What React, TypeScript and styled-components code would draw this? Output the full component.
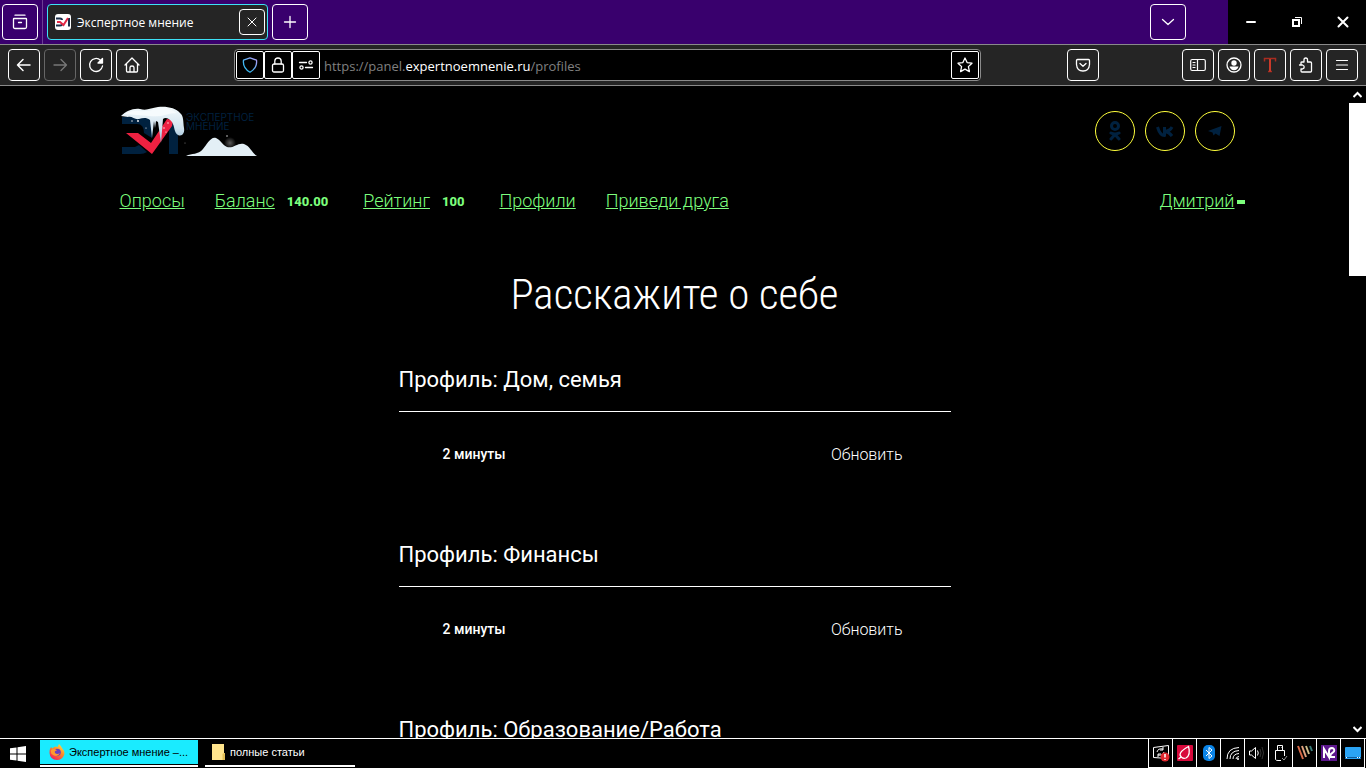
import React from "react";
import styled, { createGlobalStyle } from "styled-components";

const GlobalStyle = createGlobalStyle`
  *, *::before, *::after { box-sizing: border-box; }
  html, body, #root { height: 100%; }
  body { margin: 0; background: #000; color: #fff; font-family: Roboto, "Liberation Sans", sans-serif; overflow: hidden; }
  button { font: inherit; color: inherit; background: none; border: 0; padding: 0; margin: 0; cursor: pointer; }
  svg { display: block; }
`;

const UI_FONT = `"Open Sans", "Noto Sans", sans-serif`;

const Screen = styled.div`
  display: flex;
  flex-direction: column;
  height: 100vh;
`;

/* ---------- browser chrome ---------- */

const TabStrip = styled.div`
  display: flex;
  align-items: stretch;
  height: 44px;
  flex: none;
  background: #39006d;
  font-family: ${UI_FONT};
`;

const TabsArea = styled.div`
  display: flex;
  align-items: center;
  flex: 1;
  padding: 0 42px 0 2px;
`;

const ChromeButton = styled.button<{ $size: number; $dim?: boolean }>`
  display: grid;
  place-items: center;
  flex: none;
  width: ${(p) => p.$size}px;
  height: ${(p) => p.$size}px;
  border: 1px solid ${(p) => (p.$dim ? "#666" : "#fff")};
  border-radius: 4px;
  color: ${(p) => (p.$dim ? "#777" : "#fff")};
`;

const StripDivider = styled.span`
  width: 1px;
  height: 100%;
  margin: 0 4px;
  background: #6c3f95;
`;

const Tab = styled.div`
  display: flex;
  align-items: center;
  width: 221px;
  height: 36px;
  margin-right: 4px;
  padding: 0 2px 0 7px;
  border: 1px solid #3ee1f5;
  border-radius: 4px;
  background: #252525;
  font-size: 12px;
`;

const TabTitle = styled.span`
  flex: 1;
  margin-left: 6px;
  white-space: nowrap;
`;

const Spacer = styled.span<{ $width?: number }>`
  flex: ${(p) => (p.$width ? `0 0 ${p.$width}px` : "1")};
`;

const WindowButtons = styled.div`
  display: flex;
  background: #000;
`;

const WindowButton = styled.button`
  display: grid;
  place-items: center;
  width: 46px;
`;

const Toolbar = styled.div`
  display: flex;
  align-items: center;
  flex: none;
  height: 42px;
  padding: 0 8px;
  border-top: 1px solid #8a8a8a;
  border-bottom: 1px solid #8a8a8a;
  background: #252525;
  font-family: ${UI_FONT};
`;

const ButtonGroup = styled.div`
  display: flex;
  gap: 4px;
`;

const AddressBar = styled.form`
  display: flex;
  align-items: center;
  flex: 1;
  height: 32px;
  margin: 0;
  padding: 0 1px;
  border: 1px solid #8a8a8a;
  border-radius: 4px;
  background: #000;
  font-size: 13px;
`;

const AddressButton = styled.button`
  display: grid;
  place-items: center;
  width: 28px;
  height: 28px;
  border: 1px solid #fff;
  border-radius: 2px;
`;

const AddressText = styled.a`
  flex: 1;
  margin-left: 4px;
  padding-top: 2px;
  color: #808080;
  text-decoration: none;
  strong { color: #fff; font-weight: 400; }
`;

/* ---------- page ---------- */

const Viewport = styled.div`
  display: flex;
  flex: 1;
  min-height: 0;
`;

const Page = styled.main`
  flex: 1;
  overflow: hidden;
`;

const Container = styled.header`
  max-width: 1140px;
  margin: 0 auto;
  padding: 18px 0 0 15px;
`;

const BrandRow = styled.div`
  display: flex;
  align-items: flex-start;
  justify-content: space-between;
`;

const Social = styled.div`
  display: flex;
  gap: 10px;
  margin: 7px 10px 0 0;
`;

const SocialLink = styled.a`
  display: grid;
  place-items: center;
  width: 40px;
  height: 40px;
  border: 1px solid #ffff3c;
  border-radius: 50%;
  color: #00213f;
`;

const Nav = styled.nav`
  display: flex;
  align-items: center;
  margin-top: 31px;
  height: 24px;
  font-size: 18px;
  font-weight: 300;
  line-height: 24px;
  color: #7dff7d;
`;

const NavItem = styled.span`
  display: flex;
  align-items: center;
  margin-right: 30px;
`;

const NavLink = styled.a`
  color: inherit;
  text-decoration: underline;
`;

const NavValue = styled.span`
  margin: 1px 5px 0 12px;
  font-size: 13px;
  font-weight: 800;
`;

const UserMenu = styled.span`
  display: flex;
  align-items: center;
  gap: 2px;
  margin-left: auto;
`;

const Caret = styled.span`
  width: 8px;
  height: 4px;
  background: #7dff7d;
  margin-top: 2px;
`;

const Title = styled.h1`
  margin: 55px 0 0;
  font-family: "Roboto Condensed", Roboto, sans-serif;
  font-size: 43px;
  font-weight: 300;
  line-height: 52px;
  text-align: center;
`;

const Profiles = styled.div`
  max-width: 552px;
  margin: 40px auto 0;
`;

const ProfileCard = styled.section`
  height: 175px;
`;

const ProfileTitle = styled.h2`
  margin: 0;
  padding: 6px 0 17px;
  border-bottom: 1px solid #fff;
  font-size: 22px;
  font-weight: 400;
  line-height: 28px;
`;

const ProfileRow = styled.div`
  display: flex;
  align-items: flex-start;
  justify-content: space-between;
  padding: 31px 48px 0 44px;
`;

const Duration = styled.span`
  font-size: 14px;
  font-weight: 500;
  line-height: 22px;
`;

const UpdateButton = styled.button`
  font-size: 16px;
  font-weight: 300;
  line-height: 24px;
`;

const ScrollTrack = styled.div`
  display: flex;
  flex-direction: column;
  width: 17px;
`;

const ScrollButton = styled.button`
  display: grid;
  place-items: center;
  height: 17px;
`;

const ScrollThumb = styled.div`
  height: 173px;
  margin-bottom: auto;
  background: #fff;
`;

/* ---------- taskbar ---------- */

const Taskbar = styled.footer`
  display: flex;
  flex: none;
  height: 30px;
  border-top: 1px solid #fff;
  font-family: "Liberation Sans", Arial, sans-serif;
  font-size: 11px;
`;

const StartButton = styled.button`
  display: grid;
  place-items: center;
  width: 36px;
  margin-right: 4px;
`;

const Task = styled.button<{ $active?: boolean }>`
  display: flex;
  width: ${(p) => (p.$active ? 158 : 150)}px;
  margin: 1px 7px 1px 0;
  border-bottom: 2px solid #fff;
  color: ${(p) => (p.$active ? "#000" : "#fff")};
`;

const TaskFace = styled.span<{ $active?: boolean }>`
  display: flex;
  align-items: center;
  gap: 4px;
  width: 100%;
  height: 24px;
  padding-left: ${(p) => (p.$active ? 9 : 5)}px;
  background: ${(p) => (p.$active ? "#1aebff" : "transparent")};
  white-space: nowrap;
`;

const Tray = styled.div`
  display: flex;
  margin-left: auto;
  padding-right: 1px;
  border-left: 1px solid #fff;
`;

const TrayButton = styled.button`
  display: grid;
  place-items: center;
  width: 24px;
  border-right: 1px solid #fff;
  border-bottom: 1px solid #fff;
`;

/* ---------- icons ---------- */

type IconProps = { children: React.ReactNode; size?: number; width?: number };

const Icon = ({ children, size = 16, width = 1 }: IconProps) => (
  <svg
    width={size}
    height={size}
    viewBox="0 0 16 16"
    fill="none"
    stroke="currentColor"
    strokeWidth={width}
    strokeLinecap="round"
    strokeLinejoin="round"
    aria-hidden="true"
  >
    {children}
  </svg>
);

const Logo = () => (
  <svg width="140" height="54" viewBox="0 0 140 54" role="img" aria-label="Экспертное мнение">
    <defs>
      <linearGradient id="snow" x1="0" y1="0" x2="0" y2="1">
        <stop offset="0" stopColor="#f4fafc" />
        <stop offset="0.6" stopColor="#cfe2ee" />
        <stop offset="1" stopColor="#8fb6d3" />
      </linearGradient>
      <radialGradient id="glow">
        <stop offset="0" stopColor="#5a5a5a" />
        <stop offset="1" stopColor="#000" />
      </radialGradient>
    </defs>
    <path d="M2 13H32V34L24 29Q24 20 17 20H2Z" fill="#00213f" />
    <path d="M2 43H15L19 41L27 48Q24 50 20 50H2Z" fill="#00213f" />
    <path d="M49 22L58 14V50H49Z" fill="#00213f" />
    <path d="M6 29H18L31 39L47 15L53 16L52 22L32 50Z" fill="#ee2141" />
    <path
      d="M1 12C6 7 13 4 20 5C27 7 31 4 38 3C47 2 56 4 60 9C64 12 63 18 64 24C65 29 62 33 58 31C54 29 55 23 52 18C49 14 45 13 43 15L41 39L38 18L36 17L35 24L34 17L32 34L30 16C26 13 23 14 19 15C15 16 12 12 8 13Z"
      fill="url(#snow)"
    />
    <path d="M4 10Q13 6 20 7T36 5T57 9Q50 9 45 11T29 12T4 10Z" fill="#f6fbfd" />
    <g fill="#fff">
      <circle cx="12" cy="17" r="0.700" />
      <circle cx="18" cy="17" r="0.900" />
      <circle cx="26" cy="24" r="0.600" />
      <circle cx="44" cy="24" r="0.700" />
      <circle cx="48" cy="19" r="0.700" />
      <circle cx="46" cy="28" r="0.600" />
      <circle cx="107" cy="32" r="0.700" />
      <circle cx="65" cy="39" r="0.400" />
    </g>
    <circle cx="110" cy="39" r="6" fill="url(#glow)" />
    <path d="M66 52C72 49 78 51 83 45C87 40 91 32 96 34C101 36 102 41 107 43C113 45 118 38 124 40C130 42 132 49 137 52Z" fill="#e3eff6" />
    <g fill="#00213f" fontFamily="Inter, sans-serif" fontSize="10">
      <text x="66" y="17">ЭКСПЕРТНОЕ</text>
      <text x="66" y="26">МНЕНИЕ</text>
    </g>
  </svg>
);

const Favicon = () => (
  <svg width="16" height="16" viewBox="0 0 16 16" aria-hidden="true">
    <rect width="16" height="16" rx="3" fill="#fff" />
    <path d="M1 4.500H5Q7 4.500 7 6M1 11.500H5Q7 11.500 7 10" fill="none" stroke="#1c2f4b" strokeWidth="2" />
    <path d="M14 4V12.500" stroke="#1c2f4b" strokeWidth="2" />
    <path d="M2 8H5L8.500 11L13 4" fill="none" stroke="#e32846" strokeWidth="2" />
  </svg>
);

const TrayIcons: { label: string; icon: React.ReactNode }[] = [
  {
    label: "Обновление",
    icon: (
      <svg width="18" height="18" viewBox="0 0 18 18" fill="none" stroke="#fff">
        <path d="M1.500 3.500L16.500 1.500V14.500L1.500 13.500Z" />
        <path d="M5 8Q6 4 11 5M11 3V6H8M12 8Q11 12 6 11M6 13V10H9" />
        <circle cx="13" cy="13" r="4.500" fill="#e0282e" stroke="none" />
        <path d="M13 10V13.500M13 15V16" strokeWidth="1.500" />
      </svg>
    ),
  },
  {
    label: "Антивирус",
    icon: (
      <svg width="16" height="16" viewBox="0 0 16 16">
        <rect width="16" height="16" rx="1" fill="#d8093c" />
        <path d="M11.500 1.500Q3 6 3 10Q5 14.500 9 13Q14 10 11.500 1.500ZM4 12L1.500 14" fill="none" stroke="#fff" strokeWidth="1.300" />
      </svg>
    ),
  },
  {
    label: "Bluetooth",
    icon: (
      <svg width="12" height="16" viewBox="0 0 12 16">
        <rect width="12" height="16" rx="5" fill="#0a84e8" />
        <path d="M3 5L9 11L6 13.500V2.500L9 5L3 11" fill="none" stroke="#fff" />
      </svg>
    ),
  },
  {
    label: "Сеть",
    icon: (
      <svg width="14" height="14" viewBox="0 0 14 14" fill="none" stroke="#fff">
        <path d="M1 13Q1 2 13 1.500M4 13Q4 5 13 4.500M7 13Q7 8 13 7.500M10 13Q10 11 13 10.500" />
        <circle cx="12" cy="13" r="1" fill="#fff" stroke="none" />
      </svg>
    ),
  },
  {
    label: "Звук",
    icon: (
      <svg width="16" height="14" viewBox="0 0 16 14" fill="none" stroke="#fff">
        <path d="M0.500 5H2.500L6.500 1.500V12.500L2.500 9H0.500ZM8.500 4.500Q10 7 8.500 9.500" />
        <path d="M11 3Q13 7 11 11M13 1Q16 7 13 13" stroke="#333" />
      </svg>
    ),
  },
  {
    label: "Извлечение устройства",
    icon: (
      <svg width="14" height="18" viewBox="0 0 14 18" fill="none" stroke="#fff">
        <path d="M3.500 6V1.500H8.500V6M5 3.500H5.500M7 3.500H7.500M1.500 6.500H10.500V12M1.500 6.500V15.500Q2 16.500 4 16.500H7" />
        <path d="M8 14L10 16L13 12" stroke="#999" />
      </svg>
    ),
  },
  {
    label: "Монитор",
    icon: (
      <svg width="16" height="16" viewBox="0 0 16 16" fill="none" strokeWidth="2">
        <path d="M1 1L6 14" stroke="#d96a48" />
        <path d="M5 1L9 12" stroke="#e0a07c" />
        <path d="M9 1L12 9" stroke="#d2c08d" />
        <path d="M13 1L15 6" stroke="#397b78" />
      </svg>
    ),
  },
  {
    label: "NVDA",
    icon: (
      <svg width="16" height="16" viewBox="0 0 16 16">
        <rect width="16" height="16" fill="#5c168c" />
        <path d="M3 13V4L8 12V6Q8 3 11 3Q14 3.500 13 6.500L9.500 9.500V12H14" fill="none" stroke="#fff" strokeWidth="2" />
      </svg>
    ),
  },
  {
    label: "Рабочий стол",
    icon: (
      <svg width="16" height="12" viewBox="0 0 16 12">
        <rect width="16" height="12" rx="1" fill="#2ba4f4" />
        <path d="M0 10.500H16" stroke="#0d5b9b" />
        <path d="M1 10.500H3M12 10.500H15" stroke="#fff" strokeDasharray="1 1" />
      </svg>
    ),
  },
];

const profiles = [
  { name: "Дом, семья", duration: "2 минуты" },
  { name: "Финансы", duration: "2 минуты" },
  { name: "Образование/Работа" },
];

export default function App() {
  return (
    <Screen>
      <GlobalStyle />
      <TabStrip>
        <TabsArea>
          <ChromeButton $size={36} aria-label="Обзор вкладок">
            <Icon width={1.3}>
              <path d="M3 1.200H13M2 4.500H14Q14.500 4.500 14.500 5V13Q14.500 14.500 13 14.500H3Q1.500 14.500 1.500 13V5Q1.500 4.500 2 4.500ZM6.500 8.500H9.500" />
            </Icon>
          </ChromeButton>
          <StripDivider />
          <Tab>
            <Favicon />
            <TabTitle>Экспертное мнение</TabTitle>
            <ChromeButton $size={26} aria-label="Закрыть вкладку">
              <Icon><path d="M4 4L12 12M12 4L4 12" /></Icon>
            </ChromeButton>
          </Tab>
          <ChromeButton $size={36} aria-label="Новая вкладка">
            <Icon width={1.3}><path d="M8 2.500V13.500M2.500 8H13.500" /></Icon>
          </ChromeButton>
          <Spacer />
          <ChromeButton $size={36} aria-label="Список вкладок">
            <Icon width={1.3}><path d="M2.500 5.500L8 10.500L13.500 5.500" /></Icon>
          </ChromeButton>
        </TabsArea>
        <WindowButtons>
          <WindowButton aria-label="Свернуть"><Icon width={2}><path d="M4 8H12" /></Icon></WindowButton>
          <WindowButton aria-label="Восстановить">
            <svg width="10" height="10" viewBox="0 0 10 10" fill="none" stroke="#fff">
              <path d="M3 0.500H9.500V7" />
              <rect x="1" y="3" width="6" height="6" strokeWidth="2" />
            </svg>
          </WindowButton>
          <WindowButton aria-label="Закрыть"><Icon width={2}><path d="M3.500 3.500L12.500 12.500M12.500 3.500L3.500 12.500" /></Icon></WindowButton>
        </WindowButtons>
      </TabStrip>

      <Toolbar>
        <ButtonGroup>
          <ChromeButton $size={32} aria-label="Назад">
            <Icon width={1.5}><path d="M1.500 8H14M7 2.500L1.500 8L7 13.500" /></Icon>
          </ChromeButton>
          <ChromeButton $size={32} $dim aria-label="Вперёд">
            <Icon width={1.3}><path d="M2 8H14.500M9 2.500L14.500 8L9 13.500" /></Icon>
          </ChromeButton>
          <ChromeButton $size={32} aria-label="Обновить страницу">
            <Icon width={1.3}>
              <path d="M14.500 9A6.500 6.500 0 1 1 12.500 3.200L13.500 4.500" />
              <path d="M14.500 1.500V6H10Z" fill="currentColor" />
            </Icon>
          </ChromeButton>
          <ChromeButton $size={32} aria-label="Домой">
            <Icon width={1.3}>
              <path d="M1 8L8 1L15 8M2.500 7V14Q2.500 15 3.500 15H12.500Q13.500 15 13.500 14V7M6 15V10.500Q6 9 8 9T10 10.500V15" />
            </Icon>
          </ChromeButton>
        </ButtonGroup>
        <Spacer $width={86} />
        <AddressBar>
          <AddressButton type="button" aria-label="Защита">
            <svg width="16" height="16" viewBox="0 0 16 16" fill="none" strokeWidth="1.300">
              <defs>
                <linearGradient id="shield" x1="0" y1="1" x2="1" y2="0">
                  <stop offset="0.300" stopColor="#3db9f2" />
                  <stop offset="1" stopColor="#b79af5" />
                </linearGradient>
              </defs>
              <path d="M8 0.800L14.500 3.200Q15.500 11 8 15.200Q0.500 11 1.500 3.200Z" stroke="url(#shield)" strokeLinejoin="round" />
            </svg>
          </AddressButton>
          <AddressButton type="button" aria-label="Соединение">
            <Icon width={1.3}><rect x="2.500" y="7" width="11" height="8" rx="1.500" /><path d="M4.800 7V4Q5 1 8 1T11.200 4V7" /></Icon>
          </AddressButton>
          <AddressButton type="button" aria-label="Разрешения">
            <Icon width={1.3}><path d="M1.500 5.500H8.500M7.500 10.500H14.500" /><circle cx="12.500" cy="5.500" r="1.600" /><circle cx="3.500" cy="10.500" r="1.600" /></Icon>
          </AddressButton>
          <AddressText href="#">https://panel.<strong>expertnoemnenie.ru</strong>/profiles</AddressText>
          <AddressButton type="button" aria-label="В закладки">
            <Icon width={1.3}><path d="M8 1L10.100 5.600L15 6.200L11.400 9.600L12.400 14.600L8 12.100L3.600 14.600L4.600 9.600L1 6.200L5.900 5.600Z" /></Icon>
          </AddressButton>
        </AddressBar>
        <Spacer $width={86} />
        <ChromeButton $size={32} aria-label="Pocket">
          <Icon width={1.3}><path d="M2.500 2.500H13.500Q14.500 2.500 14.500 3.500V7.500Q14 14 8 14T1.500 7.500V3.500Q1.500 2.500 2.500 2.500ZM5 6.500L8 9.300L11 6.500" /></Icon>
        </ChromeButton>
        <Spacer $width={83} />
        <ButtonGroup>
          <ChromeButton $size={32} aria-label="Боковая панель">
            <Icon width={1.2}><rect x="0.700" y="2.500" width="14.600" height="11" rx="1.500" /><path d="M7.500 2.500V13.500M3 5.500H5M3 8H5M3 10.500H5" /></Icon>
          </ChromeButton>
          <ChromeButton $size={32} aria-label="Аккаунт">
            <Icon width={1.3}>
              <circle cx="8" cy="8" r="7" />
              <circle cx="8" cy="6" r="2.700" fill="currentColor" stroke="none" />
              <path d="M3.500 9.500H12.500Q11.500 13.200 8 13.200T3.500 9.500Z" fill="currentColor" stroke="none" />
            </Icon>
          </ChromeButton>
          <ChromeButton $size={32} aria-label="Расширение">
            <svg width="16" height="16" viewBox="0 0 16 16" aria-hidden="true">
              <path d="M2.500 4.500V1.500H13.500V4.500M6 14.500H10" fill="none" stroke="#a82c20" strokeWidth="1.500" />
              <path d="M8 2V14.500" stroke="#c93a2a" strokeWidth="2" />
            </svg>
          </ChromeButton>
          <ChromeButton $size={32} aria-label="Дополнения">
            <Icon width={1.3}>
              <path d="M3 7V5.500Q3 5 4 5H6V3Q6 1 7.800 1T9.500 3V5H12.500Q13.500 5 13.500 6V14Q13.500 15 12.500 15H4Q3 15 3 14V12H4.500Q6.200 11.500 6.200 10T4.500 8H1.500" />
            </Icon>
          </ChromeButton>
          <ChromeButton $size={32} aria-label="Меню">
            <Icon width={1.2}><path d="M2.500 3.500H13.500M2.500 8H13.500M2.500 12.500H13.500" /></Icon>
          </ChromeButton>
        </ButtonGroup>
      </Toolbar>

      <Viewport>
        <Page>
          <Container>
            <BrandRow>
              <Logo />
              <Social>
                <SocialLink href="#" aria-label="Одноклассники">
                  <svg width="14" height="20" viewBox="0 0 14 20" fill="none" stroke="currentColor" strokeWidth="3" strokeLinecap="round">
                    <circle cx="7" cy="5" r="3.500" />
                    <path d="M3 12Q7 14 11 12M7 13.500L3 18M7 13.500L11 18" />
                  </svg>
                </SocialLink>
                <SocialLink href="#" aria-label="ВКонтакте">
                  <svg width="18" height="11" viewBox="0 0 18 11" fill="none" stroke="currentColor" strokeWidth="3" strokeLinejoin="round">
                    <path d="M1.500 1Q4 9.500 8.500 9.500V1M16 1Q14 5 9 5.500Q13 6 16 10" />
                  </svg>
                </SocialLink>
                <SocialLink href="#" aria-label="Telegram">
                  <svg width="14" height="12" viewBox="0 0 14 12" fill="currentColor">
                    <path d="M0 6L13.500 1L11.500 11L7.500 8.500L5.500 10.500L4.500 7.500Z" />
                  </svg>
                </SocialLink>
              </Social>
            </BrandRow>
            <Nav>
              <NavItem><NavLink href="#">Опросы</NavLink></NavItem>
              <NavItem><NavLink href="#">Баланс</NavLink><NavValue>140.00</NavValue></NavItem>
              <NavItem><NavLink href="#">Рейтинг</NavLink><NavValue>100</NavValue></NavItem>
              <NavItem><NavLink href="#">Профили</NavLink></NavItem>
              <NavItem><NavLink href="#">Приведи друга</NavLink></NavItem>
              <UserMenu><NavLink href="#">Дмитрий</NavLink><Caret /></UserMenu>
            </Nav>
          </Container>
          <Title>Расскажите о себе</Title>
          <Profiles>
            {profiles.map(({ name, duration }) => (
              <ProfileCard key={name}>
                <ProfileTitle>Профиль: {name}</ProfileTitle>
                {duration && (
                  <ProfileRow>
                    <Duration>{duration}</Duration>
                    <UpdateButton>Обновить</UpdateButton>
                  </ProfileRow>
                )}
              </ProfileCard>
            ))}
          </Profiles>
        </Page>
        <ScrollTrack>
          <ScrollButton aria-label="Вверх">
            <svg width="9" height="7" viewBox="0 0 9 7" fill="none" stroke="#fff" strokeWidth="2"><path d="M0.500 6L4.500 2L8.500 6" /></svg>
          </ScrollButton>
          <ScrollThumb />
          <ScrollButton aria-label="Вниз">
            <svg width="9" height="7" viewBox="0 0 9 7" fill="none" stroke="#fff" strokeWidth="2"><path d="M0.500 1L4.500 5L8.500 1" /></svg>
          </ScrollButton>
        </ScrollTrack>
      </Viewport>

      <Taskbar>
        <StartButton aria-label="Пуск">
          <svg width="16" height="16" viewBox="0 0 16 16" fill="#fff"><path d="M0 2.300L6.500 1.400V7.500H0ZM7.500 1.200L16 0V7.500H7.500ZM0 8.500H6.500V14.600L0 13.700ZM7.500 8.500H16V16L7.500 14.800Z" /></svg>
        </StartButton>
        <Task $active>
          <TaskFace $active>
            <svg width="16" height="16" viewBox="0 0 16 16">
              <defs>
                <linearGradient id="fox" x1="1" y1="0" x2="0.300" y2="1">
                  <stop offset="0.100" stopColor="#ffe14a" />
                  <stop offset="0.500" stopColor="#ff8a2a" />
                  <stop offset="1" stopColor="#f0235a" />
                </linearGradient>
              </defs>
              <path d="M2 3L3.500 4.500L5 3Q7 2 8.500 3L10 0Q12 2 13 4Q16 7 15.500 10Q13.500 16 8 16Q1 15.500 0.500 9Q0.500 5 2 3Z" fill="url(#fox)" />
              <circle cx="8.300" cy="8.200" r="3.500" fill="#6a3fc0" />
              <path d="M2 6Q5 4 8 6.500Q5 6.500 6 9Q8 11 11 9Q9 13 5 11.500T2 6Z" fill="#ff9a2e" />
            </svg>
            Экспертное мнение –...
          </TaskFace>
        </Task>
        <Task>
          <TaskFace>
            <svg width="16" height="16" viewBox="0 0 16 16"><path d="M2 0H14V9H15V16H2Z" fill="#ffe48c" /><path d="M12.500 16V10Q13 9 15 9V16Z" fill="#e2bd55" /></svg>
            полные статьи
          </TaskFace>
        </Task>
        <Tray>
          {TrayIcons.map((t) => (
            <TrayButton key={t.label} aria-label={t.label}>{t.icon}</TrayButton>
          ))}
        </Tray>
      </Taskbar>
    </Screen>
  );
}
